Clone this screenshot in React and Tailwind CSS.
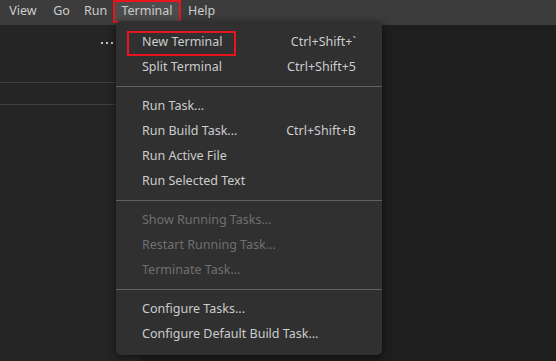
import React from 'react';

const font = { fontFamily: '"Segoe UI", "Noto Sans", "Open Sans", sans-serif' };

const menuBar = [
  { label: 'View', w: 'w-[44px]' },
  { label: 'Go', w: 'w-[33px]' },
  { label: 'Run', w: 'w-[35px]' },
  { label: 'Terminal', w: 'w-[68px]', open: true },
  { label: 'Help', w: 'w-[41px]' },
];

const groups = [
  [
    { label: 'New Terminal', keys: 'Ctrl+Shift+`', marked: true },
    { label: 'Split Terminal', keys: 'Ctrl+Shift+5' },
  ],
  [
    { label: 'Run Task...' },
    { label: 'Run Build Task...', keys: 'Ctrl+Shift+B' },
    { label: 'Run Active File' },
    { label: 'Run Selected Text' },
  ],
  [
    { label: 'Show Running Tasks...', disabled: true },
    { label: 'Restart Running Task...', disabled: true },
    { label: 'Terminate Task...', disabled: true },
  ],
  [
    { label: 'Configure Tasks...' },
    { label: 'Configure Default Build Task...' },
  ],
];

const MenuItem = ({ item }) => (
  <div
    className={`relative flex h-[25px] items-center justify-between pl-[26px] pr-[26px] text-[12.5px] ${
      item.disabled ? 'text-[#6f6f70]' : 'text-[#cccccc]'
    }`}
  >
    <span>{item.label}</span>
    {item.keys && <span>{item.keys}</span>}
    {item.marked && (
      <div className="pointer-events-none absolute left-[11px] top-[1px] h-[25px] w-[109px] border-2 border-[#e8141e]" />
    )}
  </div>
);

export default function App() {
  return (
    <div className="flex h-[361px] w-[556px] flex-col overflow-hidden bg-[#1e1e1e]" style={font}>
      <div className="flex h-[25px] items-start bg-[#3c3c3c] pl-px text-[12.5px] text-[#cccccc]">
        {menuBar.map((m) => (
          <div
            key={m.label}
            className={`flex h-[23px] items-center justify-center ${m.w} ${
              m.open ? 'border-2 border-[#e8141e] bg-[#4d4d4d]' : ''
            }`}
          >
            {m.label}
          </div>
        ))}
      </div>

      <div className="relative flex flex-1">
        <div className="flex w-[140px] flex-col bg-[#252526]">
          <div className="flex h-[57px] justify-end pr-[27px] pt-[17px]">
            <div className="flex gap-[3px]">
              <span className="h-[2px] w-[2px] bg-[#c5c5c5]" />
              <span className="h-[2px] w-[2px] bg-[#c5c5c5]" />
              <span className="h-[2px] w-[2px] bg-[#c5c5c5]" />
            </div>
          </div>
          <div className="h-[22px] border-t border-[#3f3f3f]" />
          <div className="border-t border-[#3f3f3f]" />
        </div>
        <div className="flex-1 bg-[#1e1e1e]" />

        <div className="absolute left-[116px] top-[-4px] w-[266px] rounded-[5px] bg-[#303031] pb-2 pt-[9px] shadow-[0_2px_8px_rgba(0,0,0,0.55)]">
          {groups.map((g, i) => (
            <div key={i}>
              {i > 0 && <div className="mb-[7px] mt-[6px] h-px bg-[#606060]" />}
              {g.map((item) => (
                <MenuItem key={item.label} item={item} />
              ))}
            </div>
          ))}
        </div>
      </div>
    </div>
  );
}
